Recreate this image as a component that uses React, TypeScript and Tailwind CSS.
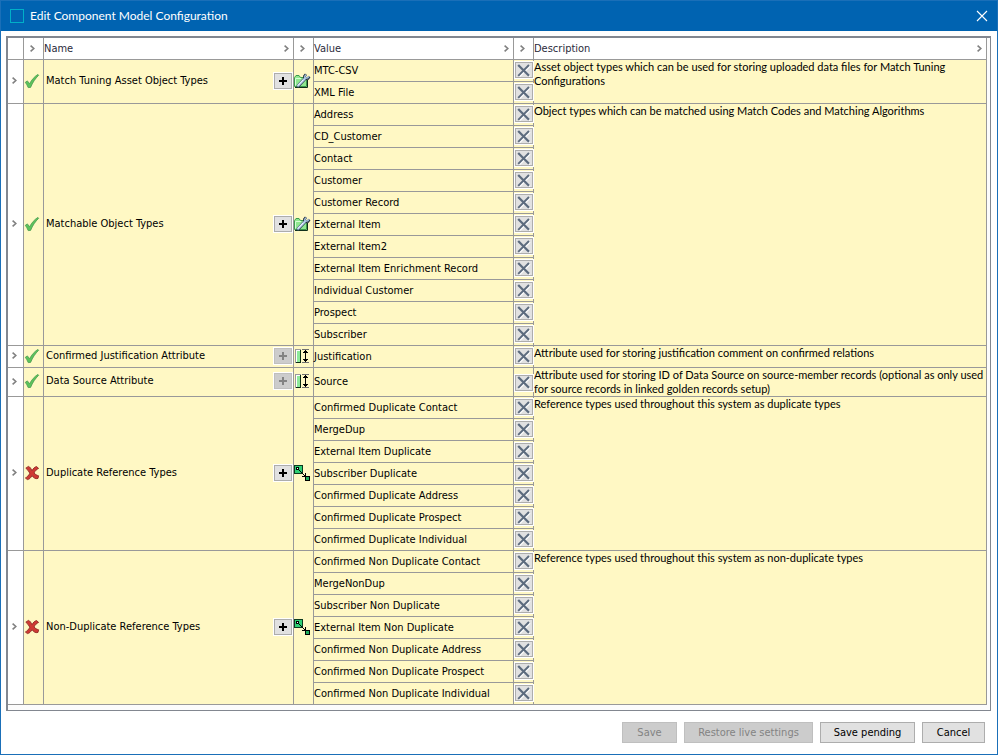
import React from "react";

type Kind = "folder" | "attribute" | "reference";

interface Entry {
  name: string;
  valid: boolean;
  canAdd: boolean;
  kind: Kind;
  values: string[];
  description: string;
  tall?: boolean;
}

const entries: Entry[] = [
  {
    name: "Match Tuning Asset Object Types",
    valid: true,
    canAdd: true,
    kind: "folder",
    values: ["MTC-CSV", "XML File"],
    description:
      "Asset object types which can be used for storing uploaded data files for Match Tuning Configurations",
  },
  {
    name: "Matchable Object Types",
    valid: true,
    canAdd: true,
    kind: "folder",
    values: [
      "Address",
      "CD_Customer",
      "Contact",
      "Customer",
      "Customer Record",
      "External Item",
      "External Item2",
      "External Item Enrichment Record",
      "Individual Customer",
      "Prospect",
      "Subscriber",
    ],
    description: "Object types which can be matched using Match Codes and Matching Algorithms",
  },
  {
    name: "Confirmed Justification Attribute",
    valid: true,
    canAdd: false,
    kind: "attribute",
    values: ["Justification"],
    description: "Attribute used for storing justification comment on confirmed relations",
  },
  {
    name: "Data Source Attribute",
    valid: true,
    canAdd: false,
    kind: "attribute",
    values: ["Source"],
    description:
      "Attribute used for storing ID of Data Source on source-member records (optional as only used for source records in linked golden records setup)",
    tall: true,
  },
  {
    name: "Duplicate Reference Types",
    valid: false,
    canAdd: true,
    kind: "reference",
    values: [
      "Confirmed Duplicate Contact",
      "MergeDup",
      "External Item Duplicate",
      "Subscriber Duplicate",
      "Confirmed Duplicate Address",
      "Confirmed Duplicate Prospect",
      "Confirmed Duplicate Individual",
    ],
    description: "Reference types used throughout this system as duplicate types",
  },
  {
    name: "Non-Duplicate Reference Types",
    valid: false,
    canAdd: true,
    kind: "reference",
    values: [
      "Confirmed Non Duplicate Contact",
      "MergeNonDup",
      "Subscriber Non Duplicate",
      "External Item Non Duplicate",
      "Confirmed Non Duplicate Address",
      "Confirmed Non Duplicate Prospect",
      "Confirmed Non Duplicate Individual",
    ],
    description: "Reference types used throughout this system as non-duplicate types",
  },
];

function Chevron() {
  return (
    <svg width="5" height="7" viewBox="0 0 5 7" className="block shrink-0" aria-hidden="true">
      <path d="M0.6 0.6 L3.8 3.5 L0.6 6.4" fill="none" stroke="#808080" strokeWidth="1.6" />
    </svg>
  );
}

function Check() {
  return (
    <svg width="16" height="16" viewBox="0 0 16 16" className="block" aria-label="Valid">
      <path
        d="M1.3 9.3 L3.4 7.9 L5.6 10.8 C7.6 6.8 10.4 3.6 13.9 1.4 L14.7 2.2 C11.2 5.6 8.6 9.6 6.6 14.4 L4.2 14.6 C3.4 12.6 2.5 10.9 1.3 9.3 Z"
        fill="#5cc45c"
        stroke="#4a9a50"
        strokeWidth="0.8"
      />
    </svg>
  );
}

function Cross() {
  return (
    <svg width="16" height="16" viewBox="0 0 16 16" className="block" aria-label="Invalid">
      <path
        d="M1.8 3.2 L4.4 1.4 C6 1.8 7 3.6 8 5.6 C9.2 3.6 10.8 1.8 12.6 1.6 L14.6 3.4 C12.8 4.2 11 5.8 10 8 C11.4 9.6 12.8 10.2 14.6 10.8 L14 13.4 C11.4 14.4 9.4 12.6 8 10.6 C6.8 12.8 5.4 14.4 3.4 14.6 L1.4 13 C3.2 12 4.8 10.4 5.8 8.2 C4.8 6.2 3.6 4.6 1.8 3.2 Z"
        fill="#cf3a34"
        stroke="#8e2a26"
        strokeWidth="0.9"
      />
    </svg>
  );
}

function KindIcon({ kind }: { kind: Kind }) {
  if (kind === "folder") {
    return (
      <svg width="17" height="16" viewBox="1 0 17 16" className="block" aria-label="Object type">
        <path d="M1.5 13.5 V4.5 L3 2.5 H6 L7.5 4.5 H13.5 V13.5 Z" fill="#8fe88f" stroke="#3c9a4c" />
        <path d="M2.5 12.5 V5.5 H8" fill="none" stroke="#d5ffd5" />
        <path d="M2 14.5 H14.5 V7" fill="none" stroke="#10301a" />
        <path d="M5.2 12.8 L12.4 5.2" stroke="#33475c" strokeWidth="3.4" strokeLinecap="round" />
        <path d="M11.6 6 L11.4 3.2 L13 1.2 M12 5.8 L15 5.6 L16.4 3.6" stroke="#22303e" strokeWidth="2.6" fill="none" />
        <path d="M5.2 12.6 L12.2 5.2" stroke="#b9d4ee" strokeWidth="2.2" strokeLinecap="round" />
        <path d="M11.8 5.6 L11.8 3.2 L13 1.6 M12.2 5.2 L14.8 4.8 L16 3.4" stroke="#a9c4e0" strokeWidth="1.4" fill="none" />
        <path d="M5 12.4 L10 7" stroke="#ffffff" strokeWidth="0.8" />
      </svg>
    );
  }
  if (kind === "attribute") {
    return (
      <svg width="17" height="16" viewBox="0 0 17 16" className="block" aria-label="Attribute" shapeRendering="crispEdges">
        <rect x="1" y="1" width="6" height="14" fill="#9a9a9a" />
        <rect x="2" y="2" width="4" height="12" fill="#ffffff" />
        <rect x="3" y="3" width="3" height="11" fill="#8eea9a" />
        <rect x="6" y="2" width="1" height="13" fill="#0c2c14" />
        <rect x="2" y="14" width="5" height="1" fill="#0c2c14" />
        <rect x="8" y="1" width="7" height="1" fill="#6f6f6f" />
        <rect x="8" y="14" width="7" height="1" fill="#6f6f6f" />
        <rect x="11" y="2" width="1" height="12" fill="#000000" />
        <rect x="10" y="3" width="3" height="1" fill="#000000" />
        <rect x="9" y="4" width="5" height="1" fill="#000000" />
        <rect x="9" y="11" width="5" height="1" fill="#000000" />
        <rect x="10" y="12" width="3" height="1" fill="#000000" />
      </svg>
    );
  }
  return (
    <svg width="17" height="16" viewBox="0 0 17 16" className="block" aria-label="Reference" shapeRendering="crispEdges">
      <rect x="0" y="0" width="9" height="9" fill="#0b3a1e" />
      <rect x="1" y="1" width="7" height="7" fill="#2fcf74" />
      <rect x="2" y="2" width="3" height="3" fill="#000000" />
      <rect x="3" y="3" width="1" height="1" fill="#ffffff" />
      <rect x="5" y="5" width="1" height="1" fill="#000000" />
      <rect x="6" y="6" width="1" height="1" fill="#000000" />
      <rect x="7" y="7" width="1" height="1" fill="#000000" />
      <rect x="8" y="8" width="1" height="1" fill="#000000" />
      <rect x="9" y="9" width="1" height="1" fill="#000000" />
      <rect x="10" y="10" width="2" height="2" fill="#000000" />
      <rect x="11" y="8" width="1" height="3" fill="#000000" />
      <rect x="8" y="11" width="3" height="1" fill="#000000" />
      <rect x="11" y="11" width="5" height="5" fill="#000000" />
      <rect x="12" y="12" width="3" height="3" fill="#1fae5c" />
    </svg>
  );
}

function AddButton({ label, enabled }: { label: string; enabled: boolean }) {
  return (
    <button
      type="button"
      disabled={!enabled}
      aria-label={`Add value to ${label}`}
      className="h-[18px] w-5 shrink-0 border border-white bg-[#adadad] p-px text-black disabled:bg-[#bfbfbf] disabled:text-[#838383]"
    >
      <span className={enabled ? "flex size-full items-center justify-center bg-[#e1e1e1]" : "flex size-full items-center justify-center bg-[#cccccc]"}>
        <svg width="8" height="8" viewBox="0 0 8 8" shapeRendering="crispEdges" aria-hidden="true">
          <path d="M0 3 H8 V5 H0 Z M3 0 H5 V8 H3 Z" fill="currentColor" />
        </svg>
      </span>
    </button>
  );
}

function RemoveButton({ label }: { label: string }) {
  return (
    <button
      type="button"
      aria-label={`Remove ${label}`}
      className="relative mt-px block h-[18px] w-5 border border-white bg-[#adadad] p-px"
    >
      <span className="flex size-full items-center justify-center bg-[#e1e1e1]">
        <svg width="14" height="13" viewBox="0 0 14 13" aria-hidden="true">
          <path d="M2.5 2 L13 12.5 M13 2 L2.5 12.5" stroke="#ffffff" strokeWidth="1.6" />
          <path d="M1.2 1 L12 11.8" stroke="#5c6b7e" strokeWidth="2.3" />
          <path d="M12 1 L1.2 11.8" stroke="#5c6b7e" strokeWidth="1.9" />
        </svg>
      </span>
    </button>
  );
}

const line = "border-r border-b border-[#999999] p-0";
const groupLine = "border-r border-b border-[#999999] px-0 pt-0 pb-0.5";

function EntryRows({ entry }: { entry: Entry }) {
  const span = entry.values.length;
  return (
    <>
      {entry.values.map((value, i) => (
        <tr key={value} className={entry.tall ? "h-[29px]" : "h-[22px]"}>
          {i === 0 && (
            <>
              <td rowSpan={span} className={`${groupLine} bg-white`}>
                <button type="button" aria-label={`Expand ${entry.name}`} className="flex w-full justify-center py-1 pr-0.5">
                  <Chevron />
                </button>
              </td>
              <td rowSpan={span} className={groupLine}>
                {entry.valid ? <Check /> : <Cross />}
              </td>
              <th rowSpan={span} scope="rowgroup" className={`${groupLine} text-left font-normal`}>
                <div className="flex items-center justify-between pl-0.5">
                  <span>{entry.name}</span>
                  <AddButton label={entry.name} enabled={entry.canAdd} />
                </div>
              </th>
              <td rowSpan={span} className={groupLine}>
                <KindIcon kind={entry.kind} />
              </td>
            </>
          )}
          <td className={line}>{value}</td>
          <td className={entry.tall ? `${line} align-middle` : `${line} align-top`}>
            <RemoveButton label={value} />
          </td>
          {i === 0 && (
            <td rowSpan={span} className={`${line} align-top font-['Lato','DejaVu_Sans_Condensed',sans-serif]`}>
              {entry.description}
            </td>
          )}
        </tr>
      ))}
    </>
  );
}

function HeaderCell({ title }: { title?: string }) {
  return (
    <th scope="col" className={`${line} bg-white font-normal text-[#2b2b3b]`}>
      <div className={title ? "flex items-center justify-between pr-1" : "flex items-center justify-center pr-0.5"}>
        {title && <span>{title}</span>}
        <Chevron />
      </div>
    </th>
  );
}

const footerButton =
  "h-[21px] border border-[#adadad] bg-[#e1e1e1] text-[11px] leading-[14px] text-black disabled:border-[#bfbfbf] disabled:bg-[#cccccc] disabled:text-[#838383]";

export default function App() {
  return (
    <div className="flex min-h-screen flex-col border border-[#1a6fb8] bg-white font-['DejaVu_Sans_Condensed','DejaVu_Sans',sans-serif] text-[11px] leading-[14px] text-black">
      <header className="flex h-[30px] items-center justify-between bg-[#0063b1] px-[9px] text-white">
        <div className="flex items-center gap-1.5">
          <span className="size-3.5 border border-[#00b0c8]" />
          <h1 className="font-['Lato','Open_Sans',sans-serif] text-[12px] leading-4">
            Edit Component Model Configuration
          </h1>
        </div>
        <button type="button" aria-label="Close">
          <svg width="12" height="12" viewBox="0 0 12 12" className="block" aria-hidden="true">
            <path d="M1 1 L11 11 M11 1 L1 11" stroke="#ffffff" strokeWidth="1.1" />
          </svg>
        </button>
      </header>

      <main className="flex flex-col gap-[11px] pt-[5px] pr-1.5 pb-[11px] pl-[5px]">
        <div className="border-t-2 border-r border-b border-l-2 border-[#828790] bg-[#fcfcfc] pr-[3px] pb-[5px]">
          <table className="w-full table-fixed border-separate border-spacing-0 bg-[#fff8c4]">
            <colgroup>
              <col className="w-4" />
              <col className="w-5" />
              <col className="w-[250px]" />
              <col className="w-5" />
              <col className="w-[200px]" />
              <col className="w-5" />
              <col />
            </colgroup>
            <thead>
              <tr className="h-[22px]">
                <td className={`${line} bg-white`} />
                <HeaderCell />
                <HeaderCell title="Name" />
                <HeaderCell />
                <HeaderCell title="Value" />
                <HeaderCell />
                <HeaderCell title="Description" />
              </tr>
            </thead>
            <tbody>
              {entries.map((entry) => (
                <EntryRows key={entry.name} entry={entry} />
              ))}
            </tbody>
          </table>
        </div>

        <footer className="flex justify-end gap-[7px] pr-1.5">
          <button type="button" disabled className={`${footerButton} w-[55px]`}>
            Save
          </button>
          <button type="button" disabled className={`${footerButton} w-[129px]`}>
            Restore live settings
          </button>
          <button type="button" className={`${footerButton} w-[95px]`}>
            Save pending
          </button>
          <button type="button" className={`${footerButton} w-[63px]`}>
            Cancel
          </button>
        </footer>
      </main>
    </div>
  );
}
